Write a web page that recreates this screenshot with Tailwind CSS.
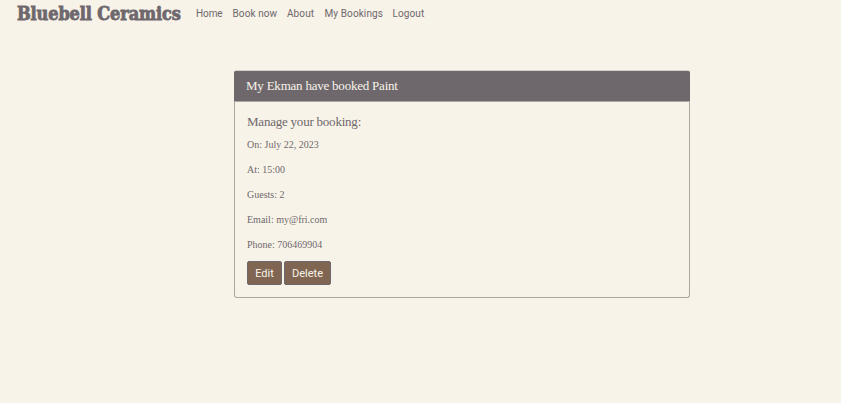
<!DOCTYPE html>
<html lang="en">
<head>
<meta charset="utf-8">
<title>Bluebell Ceramics</title>
<script src="https://cdn.jsdelivr.net/npm/@tailwindcss/browser@4"></script>
</head>
<body class="min-h-screen bg-[#f8f3e8] text-[#6e686d] font-['Liberation_Serif',serif]">
<nav class="flex h-[27px] items-center pl-[17px] whitespace-nowrap">
<a class="w-[179px] shrink-0 font-['DejaVu_Serif_Condensed','DejaVu_Serif',serif] text-[18px] leading-[26px] font-bold tracking-[-0.13px] [-webkit-text-stroke:0.8px_#6e686d]">Bluebell Ceramics</a>
<div class="flex font-['Roboto',sans-serif] text-[10px] leading-[15px] tracking-[0.1px]">
<a class="w-[36.5px] tracking-[-0.1px]">Home</a><a class="w-[54.5px]">Book now</a><a class="w-[37.5px]">About</a><a class="w-[68px]">My Bookings</a><a>Logout</a>
</div>
</nav>
<main class="ml-[234px] mt-[43px] w-[456px] h-[228px] flex flex-col rounded-[3px] border border-[#aaa6a2] border-t-[#d5d0c9]">
<header class="-mx-px h-[31px] shrink-0 rounded-t-[2px] border-b border-[#aaa6a2] bg-[#6e686d] pl-3 text-[13px] leading-[30px] tracking-[-0.22px] text-[#f8f3e8]">My Ekman have booked Paint</header>
<section class="px-3 pt-3 text-[10px] leading-[15px]">
<h1 class="mb-[7px] text-[13px] leading-4 tracking-[-0.22px]">Manage your booking:</h1>
<div class="flex flex-col gap-[10px]">
<p>On: July 22, 2023</p><p>At: 15:00</p><p>Guests: 2</p><p>Email: my@fri.com</p><p>Phone: 706469904</p>
</div>
<div class="mt-[9px] flex gap-[2px] font-['Roboto',sans-serif] text-[11px] text-[#f8f3e8]">
<button class="h-6 w-[35px] rounded-[2px] border border-[#6e686d] bg-[#806652]">Edit</button>
<button class="h-6 w-[47px] rounded-[2px] border border-[#6e686d] bg-[#806652]">Delete</button>
</div>
</section>
</main>
</body>
</html>
